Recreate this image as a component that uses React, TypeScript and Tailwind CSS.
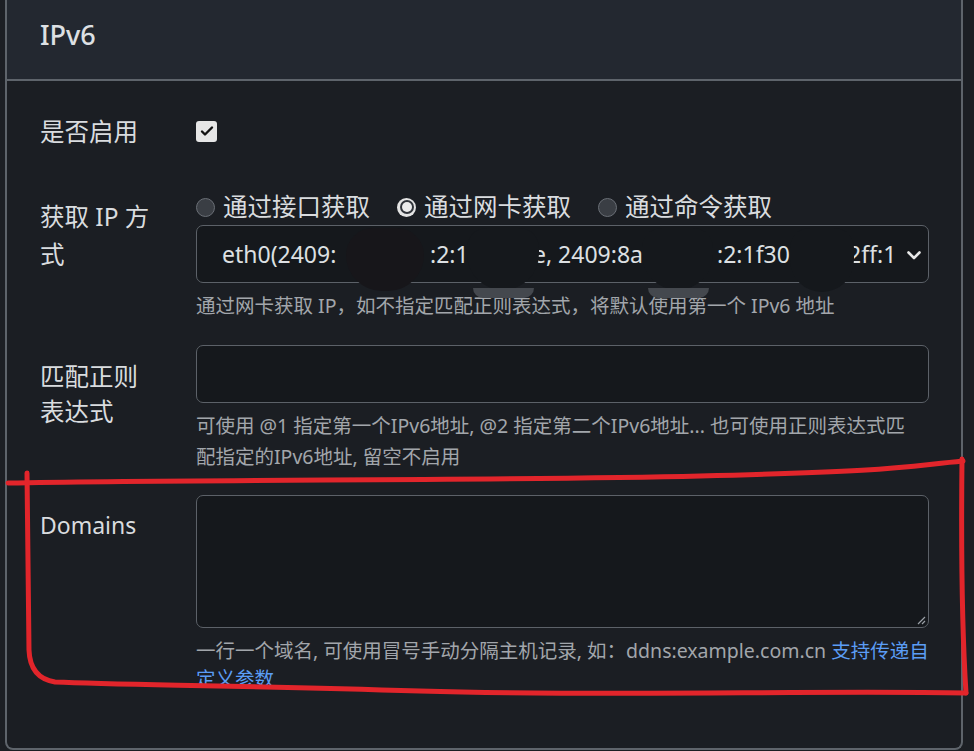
import React from "react";

function Radio({ checked, label }: { checked?: boolean; label: string }) {
  return (
    <div className="flex items-center mr-[27px]">
      {checked ? (
        <span className="w-[19px] h-[19px] rounded-full bg-[#e4e4e4] flex items-center justify-center">
          <span className="w-[14px] h-[14px] rounded-full bg-[#30343a] flex items-center justify-center">
            <span className="w-[10px] h-[10px] rounded-full bg-[#ececec]" />
          </span>
        </span>
      ) : (
        <span className="w-[19px] h-[19px] rounded-full bg-[#3a3e44] border border-[#6a6f76]" />
      )}
      <span className="ml-[8px]">{label}</span>
    </div>
  );
}

export default function App() {
  return (
    <div className="relative w-[974px] h-[751px] overflow-hidden bg-[#1c1f24] font-['Noto_Sans','Noto_Sans_CJK_SC',sans-serif] text-[#d9dcdf]">
      <div className="ml-[5px] w-[958px] h-[750px] border-2 border-t-0 border-[#5e646b] rounded-b-[8px] bg-[#1b1e23] flex flex-col">
        <div className="h-[81px] bg-[#232830] border-b-2 border-[#5e646b] flex items-center pl-[33px] pb-[8px]">
          <span className="text-[27px] font-medium text-[#dde0e3]">IPv6</span>
        </div>
        <div className="pl-[33px] pr-[32px] pt-[33px]">
          {/* Row 1 */}
          <div className="grid grid-cols-[156px_733px]">
            <div className="text-[24.5px] leading-[36px]">是否启用</div>
            <div className="h-[36px] flex items-center">
              <span className="w-[21px] h-[21px] rounded-[3px] bg-[#e6e6e6] flex items-center justify-center -mt-[2px]">
                <svg width="16" height="16" viewBox="0 0 16 16">
                  <path d="M3 8.5l3 3L13 4.5" fill="none" stroke="#111" strokeWidth="2.4" strokeLinecap="round" strokeLinejoin="round" />
                </svg>
              </span>
            </div>
          </div>

          {/* Row 2 */}
          <div className="grid grid-cols-[156px_733px] mt-[39px]">
            <div className="text-[24.5px] leading-[38px] pt-[9px] w-[116px]">获取 IP 方式</div>
            <div>
              <div className="h-[36px] flex items-center text-[24.5px]">
                <Radio label="通过接口获取" />
                <Radio checked label="通过网卡获取" />
                <Radio label="通过命令获取" />
              </div>
              <div className="relative h-[58px] rounded-[7px] border border-[#5c6168] bg-[#15181c] flex items-center pl-[25px] text-[23px] text-[#dde0e3] whitespace-nowrap">
                <span className="w-[208px] overflow-hidden">eth0(2409:</span>
                <span className="w-[103px] overflow-hidden">:2:1</span>
                <span className="w-[184px] overflow-hidden">e, 2409:8a</span>
                <span className="w-[131px] overflow-hidden">:2:1f30</span>
                <span>2ff:1</span>
                <svg className="absolute right-[6px] top-[23px]" width="16" height="12" viewBox="0 0 16 12">
                  <path d="M2.5 3.5l5.5 5.5 5.5-5.5" fill="none" stroke="#e8e8e8" strokeWidth="2.6" strokeLinecap="round" strokeLinejoin="round" />
                </svg>
              </div>
              <div className="mt-[8px] text-[19.5px] leading-[30px] text-[#a2a6ab] whitespace-nowrap">
                通过网卡获取 IP，如不指定匹配正则表达式，将默认使用第一个 IPv6 地址
              </div>
            </div>
          </div>

          {/* Row 3 */}
          <div className="grid grid-cols-[156px_733px] mt-[24px]">
            <div className="text-[24.5px] leading-[35px] pt-[14px] w-[116px]">匹配正则表达式</div>
            <div>
              <div className="h-[58px] rounded-[7px] border border-[#5c6168] bg-[#15181c]" />
              <div className="mt-[7px] text-[19.5px] leading-[31px] text-[#a2a6ab] whitespace-nowrap">
                可使用 @1 指定第一个IPv6地址, @2 指定第二个IPv6地址... 也可使用正则表达式匹
                <br />
                配指定的IPv6地址, 留空不启用
              </div>
            </div>
          </div>

          {/* Row 4 */}
          <div className="grid grid-cols-[156px_733px] mt-[23px]">
            <div className="text-[23px] leading-[35px] pt-[13px]">Domains</div>
            <div>
              <div className="relative h-[133px] rounded-[7px] border border-[#5c6168] bg-[#15181c]">
                <svg className="absolute right-[2px] bottom-[2px]" width="10" height="10" viewBox="0 0 10 10">
                  <path d="M9 2L2 9M9 6L6 9" stroke="#9aa0a6" strokeWidth="1.2" />
                </svg>
              </div>
              <div className="mt-[9px] text-[19.5px] leading-[28px] text-[#a2a6ab] whitespace-nowrap">
                一行一个域名, 可使用冒号手动分隔主机记录, 如：ddns:example.com.cn <span className="text-[#5b9df5]">支持传递自</span>
                <br />
                <span className="text-[#5b9df5]">定义参数</span>
              </div>
            </div>
          </div>
        </div>
      </div>

      {/* redaction blobs */}
      <div className="absolute left-[346px] top-[228px] w-[78px] h-[63px] rounded-b-[40px] rounded-t-[30px] bg-[#17161a]" />
      <div className="absolute left-[467px] top-[228px] w-[72px] h-[62px] rounded-b-[36px] rounded-t-[20px] bg-[#15181c]" />
      <div className="absolute left-[473px] top-[288px] w-[61px] h-[10px] rounded-b-full bg-[#44484e]" />
      <div className="absolute left-[642px] top-[228px] w-[71px] h-[62px] rounded-b-[36px] rounded-t-[20px] bg-[#15181c]" />
      <div className="absolute left-[648px] top-[288px] w-[61px] h-[10px] rounded-b-full bg-[#44484e]" />
      <div className="absolute left-[790px] top-[228px] w-[64px] h-[64px] rounded-b-[32px] rounded-t-[20px] bg-[#15181c]" />

      {/* red hand-drawn outline */}
      <svg className="absolute left-0 top-0 pointer-events-none" width="974" height="751" viewBox="0 0 974 751">
        <g fill="none" stroke="#e2252b" strokeWidth="5" strokeLinecap="round" strokeLinejoin="round">
          <path d="M8 483 C 200 479, 500 481, 700 476 S 900 467, 963 461" />
          <path d="M962 459 C 961 550, 962 630, 966 693" />
          <path d="M966 693 C 800 690, 620 697, 420 691 S 120 685, 55 682 Q 30 678 29 650 L 27 473" />
        </g>
      </svg>
    </div>
  );
}
